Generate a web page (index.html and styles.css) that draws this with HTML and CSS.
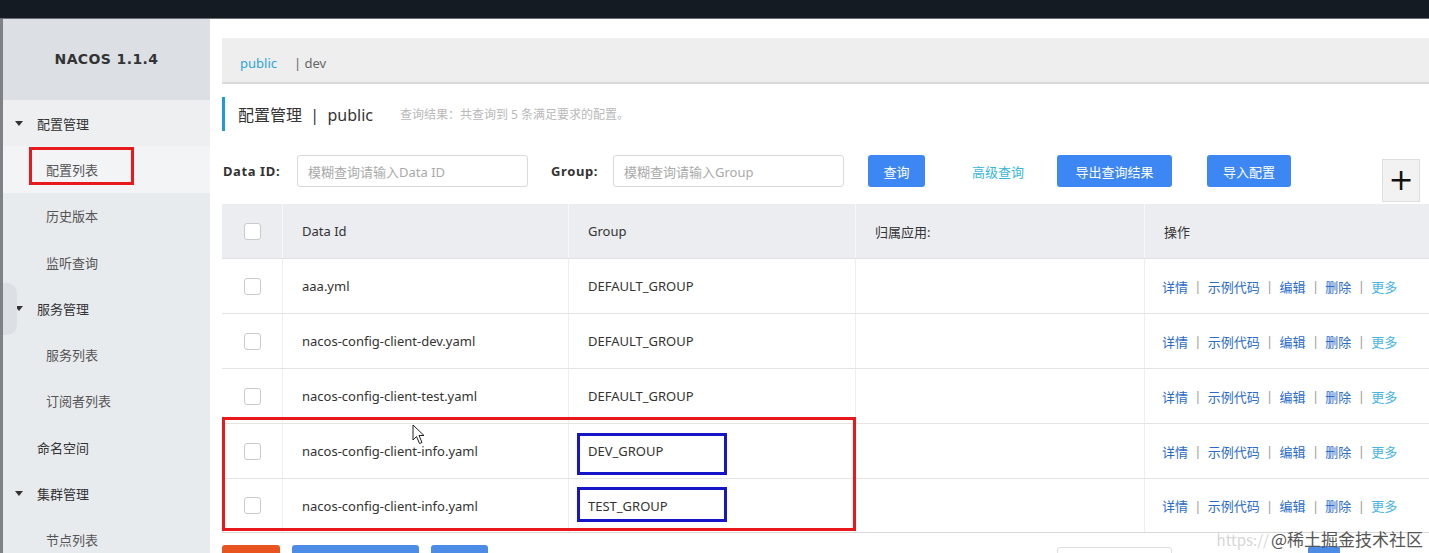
FILE: index.html
```html
<!DOCTYPE html>
<html lang="zh-CN">
<head>
<meta charset="utf-8">
<title>NACOS 1.1.4</title>
<link rel="stylesheet" href="styles.css">
</head>
<body>
<div class="topbar"></div>
<div class="layout">
  <aside class="sidebar">
    <div class="logo">NACOS 1.1.4</div>
    <ul class="menu">
      <li class="item group open"><span class="caret"></span>配置管理</li>
      <li class="item sub active"><span>配置列表</span><span class="mark-red-small"></span></li>
      <li class="item sub">历史版本</li>
      <li class="item sub">监听查询</li>
      <li class="item group"><span class="caret"></span>服务管理</li>
      <li class="item sub">服务列表</li>
      <li class="item sub">订阅者列表</li>
      <li class="item top">命名空间</li>
      <li class="item group"><span class="caret"></span>集群管理</li>
      <li class="item sub">节点列表</li>
    </ul>
    <div class="handle"></div>
  </aside>
  <main class="main">
    <div class="crumbs">
      <span class="crumb-active">public</span>
      <span class="crumb">| dev</span>
    </div>
    <div class="title">
      <span class="title-main">配置管理&nbsp;&nbsp;|&nbsp;&nbsp;public</span>
      <span class="title-desc">查询结果：共查询到 5 条满足要求的配置。</span>
    </div>
    <div class="search">
      <label class="label">Data ID:</label>
      <div class="input">模糊查询请输入Data ID</div>
      <label class="label label-group">Group:</label>
      <div class="input">模糊查询请输入Group</div>
      <button class="btn btn-query">查询</button>
      <a class="link-adv">高级查询</a>
      <button class="btn btn-export">导出查询结果</button>
      <button class="btn btn-import">导入配置</button>
      <button class="btn-plus">+</button>
    </div>
    <div class="table">
      <div class="row head">
        <div class="cell cb"><span class="checkbox"></span></div>
        <div class="cell">Data Id</div>
        <div class="cell">Group</div>
        <div class="cell">归属应用:</div>
        <div class="cell">操作</div>
      </div>
      <div class="row">
        <div class="cell cb"><span class="checkbox"></span></div>
        <div class="cell">aaa.yml</div>
        <div class="cell">DEFAULT_GROUP</div>
        <div class="cell"></div>
        <div class="cell ops"><a>详情</a><i>|</i><a>示例代码</a><i>|</i><a>编辑</a><i>|</i><a>删除</a><i>|</i><a class="more">更多</a></div>
      </div>
      <div class="row">
        <div class="cell cb"><span class="checkbox"></span></div>
        <div class="cell">nacos-config-client-dev.yaml</div>
        <div class="cell">DEFAULT_GROUP</div>
        <div class="cell"></div>
        <div class="cell ops"><a>详情</a><i>|</i><a>示例代码</a><i>|</i><a>编辑</a><i>|</i><a>删除</a><i>|</i><a class="more">更多</a></div>
      </div>
      <div class="row">
        <div class="cell cb"><span class="checkbox"></span></div>
        <div class="cell">nacos-config-client-test.yaml</div>
        <div class="cell">DEFAULT_GROUP</div>
        <div class="cell"></div>
        <div class="cell ops"><a>详情</a><i>|</i><a>示例代码</a><i>|</i><a>编辑</a><i>|</i><a>删除</a><i>|</i><a class="more">更多</a></div>
      </div>
      <div class="row">
        <div class="cell cb"><span class="checkbox"></span></div>
        <div class="cell">nacos-config-client-info.yaml</div>
        <div class="cell boxed">DEV_GROUP<span class="mark-blue b1"></span></div>
        <div class="cell"></div>
        <div class="cell ops"><a>详情</a><i>|</i><a>示例代码</a><i>|</i><a>编辑</a><i>|</i><a>删除</a><i>|</i><a class="more">更多</a></div>
      </div>
      <div class="row last">
        <div class="cell cb"><span class="checkbox"></span></div>
        <div class="cell">nacos-config-client-info.yaml</div>
        <div class="cell boxed">TEST_GROUP<span class="mark-blue b2"></span></div>
        <div class="cell"></div>
        <div class="cell ops"><a>详情</a><i>|</i><a>示例代码</a><i>|</i><a>编辑</a><i>|</i><a>删除</a><i>|</i><a class="more">更多</a></div>
      </div>
      <div class="mark-red"></div>
      <svg class="cursor" width="14" height="21" viewBox="0 0 14 21"><path d="M1 1 L1 16 L4.5 12.5 L7.5 19.5 L10 18.5 L7 11.5 L12 11.5 Z" fill="#fff" stroke="#222" stroke-width="1" stroke-linejoin="round"/></svg>
    </div>
    <div class="batch">
      <span class="bbtn orange"></span>
      <span class="bbtn blue wide"></span>
      <span class="bbtn blue"></span>
      <span class="pager-input"></span>
      <span class="pager-cur"></span>
    </div>
  </main>
</div>
<div class="watermark"><span class="wm-url">https://</span>@稀土掘金技术社区</div>
</body>
</html>
```
FILE: styles.css
```css
html, body {
  margin: 0;
  padding: 0;
  height: 553px;
  overflow: hidden;
  background: #fff;
  font-family: "Noto Sans", "Noto Sans CJK SC", sans-serif;
  font-size: 13px;
  color: #333;
}
.topbar {
  height: 18px;
  background: #151b22;
  border-bottom: 1px solid #6a6e73;
}
.layout {
  display: flex;
  height: 534px;
}
.sidebar {
  position: relative;
  width: 207px;
  flex: none;
  border-left: 3px solid #7e8286;
  background: #e8ebee;
}
.logo {
  height: 81px;
  background: #dce0e5;
  display: flex;
  align-items: center;
  justify-content: center;
  font-family: "DejaVu Sans", sans-serif;
  font-weight: bold;
  font-size: 14px;
  letter-spacing: 0.4px;
  color: #333;
  padding-bottom: 1px;
  box-sizing: border-box;
}
.menu {
  list-style: none;
  margin: 0;
  padding: 0;
}
.item {
  position: relative;
  height: 46.3px;
  display: flex;
  align-items: center;
  font-size: 13px;
  color: #444;
}
.group, .top {
  padding-left: 34px;
  color: #333;
}
.group.open {
  background: #edeff1;
}
.sub {
  padding-left: 43px;
  color: #555;
}
.sub.active {
  background: #f3f4f6;
}
.caret {
  position: absolute;
  left: 12px;
  top: 21px;
  width: 0;
  height: 0;
  border-left: 4px solid transparent;
  border-right: 4px solid transparent;
  border-top: 5px solid #333;
}
.mark-red-small {
  position: absolute;
  left: 26px;
  top: 1px;
  width: 105px;
  height: 38px;
  box-sizing: border-box;
  border: 3px solid #e8191c;
}
.handle {
  position: absolute;
  left: 0;
  top: 264px;
  width: 14px;
  height: 52px;
  background: #dcdfe3;
  border-radius: 0 10px 10px 0;
}
.main {
  flex: 1;
  padding: 19px 0 0 12px;
  min-width: 0;
}
.crumbs {
  height: 46px;
  background: #eeeeee;
  border-bottom: 2px solid #dadada;
  display: flex;
  align-items: center;
  padding: 5px 0 0 18px;
  box-sizing: border-box;
}
.crumb-active {
  color: #2aa5d9;
  margin-right: 17px;
}
.crumb {
  color: #666;
}
.title {
  margin-top: 13px;
  height: 34px;
  border-left: 3px solid #1c9bd6;
  padding-left: 13px;
  display: flex;
  align-items: center;
}
.title-main {
  font-size: 16px;
  color: #333;
}
.title-desc {
  margin-left: 27px;
  font-size: 12px;
  color: #b9b9b9;
}
.search {
  margin-top: 24px;
  height: 32px;
  display: flex;
  align-items: center;
}
.label {
  font-weight: bold;
  font-size: 13px;
  letter-spacing: 0.6px;
  color: #333;
  margin-left: 1px;
  width: 74px;
}
.label-group {
  margin-left: 23px;
  width: 62px;
}
.input {
  width: 231px;
  height: 32px;
  box-sizing: border-box;
  border: 1px solid #d9d9d9;
  border-radius: 3px;
  padding-left: 10px;
  display: flex;
  align-items: center;
  color: #aaa;
  font-size: 13px;
}
.btn {
  height: 32px;
  border: none;
  border-radius: 3px;
  background: #3d87f5;
  color: #fff;
  font-family: inherit;
  font-size: 13px;
  padding: 0;
}
.btn-query {
  margin-left: 24px;
  width: 57px;
}
.link-adv {
  margin-left: 47px;
  color: #36b6d8;
  font-size: 13px;
}
.btn-export {
  margin-left: 33px;
  width: 115px;
}
.btn-import {
  margin-left: 35px;
  width: 84px;
}
.btn-plus {
  align-self: flex-start;
  margin-top: 4px;
  margin-left: 91px;
  width: 38px;
  height: 43px;
  flex: none;
  border: 1px solid #dedede;
  background: #f2f2f2;
  font-family: "DejaVu Sans", sans-serif;
  font-size: 30px;
  line-height: 1;
  color: #111;
  padding: 0 0 2px;
}
.table {
  position: relative;
  margin-top: 17px;
}
.row {
  display: grid;
  grid-template-columns: 61px 286px 287px 289px 1fr;
  height: 55px;
  box-sizing: border-box;
  border-bottom: 1px solid #e4e4e4;
}
.row.last {
  height: 54px;
  border-bottom-color: #d8d8d8;
}
.row.head {
  background: #ebedf0;
  border-bottom: 1px solid #e0e0e0;
}
.cell {
  position: relative;
  display: flex;
  align-items: center;
  padding-left: 19px;
  border-right: 1px solid #eeeeee;
  color: #333;
  font-size: 13px;
}
.head .cell {
  border-right-color: #f6f7f8;
}
.cell:last-child {
  border-right: none;
}
.cell.cb {
  justify-content: center;
  padding-left: 0;
}
.checkbox {
  width: 17px;
  height: 17px;
  box-sizing: border-box;
  border: 1px solid #c8cad0;
  border-radius: 3px;
  background: #fff;
}
.ops {
  padding-left: 17px;
}
.ops a {
  color: #2a6bc9;
}
.ops a.more {
  color: #46b4e6;
}
.ops i {
  font-style: normal;
  color: #9a9a9a;
  margin: 0 6.3px;
}
.mark-blue {
  position: absolute;
  left: 8px;
  width: 150px;
  box-sizing: border-box;
  border: 3px solid #1616c8;
}
.mark-blue.b1 {
  top: 9px;
  height: 42px;
}
.mark-blue.b2 {
  top: 8px;
  height: 35px;
}
.mark-red {
  position: absolute;
  left: 0;
  top: 213px;
  width: 634px;
  height: 114px;
  box-sizing: border-box;
  border: 3px solid #e8191c;
}
.cursor {
  position: absolute;
  left: 190px;
  top: 220px;
}
.batch {
  position: relative;
  margin-top: 12px;
  display: flex;
  height: 20px;
}
.bbtn {
  height: 20px;
  width: 58px;
  border-radius: 3px 3px 0 0;
}
.bbtn.orange {
  background: #e8531f;
}
.bbtn.blue {
  background: #4d8ce6;
  margin-left: 12px;
  width: 57px;
}
.bbtn.blue.wide {
  width: 127px;
}
.pager-input {
  position: absolute;
  left: 835px;
  top: 2px;
  width: 113px;
  height: 20px;
  border: 1px solid #ddd;
  border-radius: 3px;
}
.pager-cur {
  position: absolute;
  left: 1086px;
  top: 1px;
  width: 32px;
  height: 20px;
  background: #4d8ce6;
  border-radius: 3px;
}
.watermark {
  position: absolute;
  right: 6px;
  top: 526px;
  font-family: "Noto Sans CJK SC", sans-serif;
  font-size: 17px;
  color: #555;
  letter-spacing: 0;
}
.wm-url {
  color: #d6d6d6;
  font-size: 15px;
  margin-right: 2px;
}
```
